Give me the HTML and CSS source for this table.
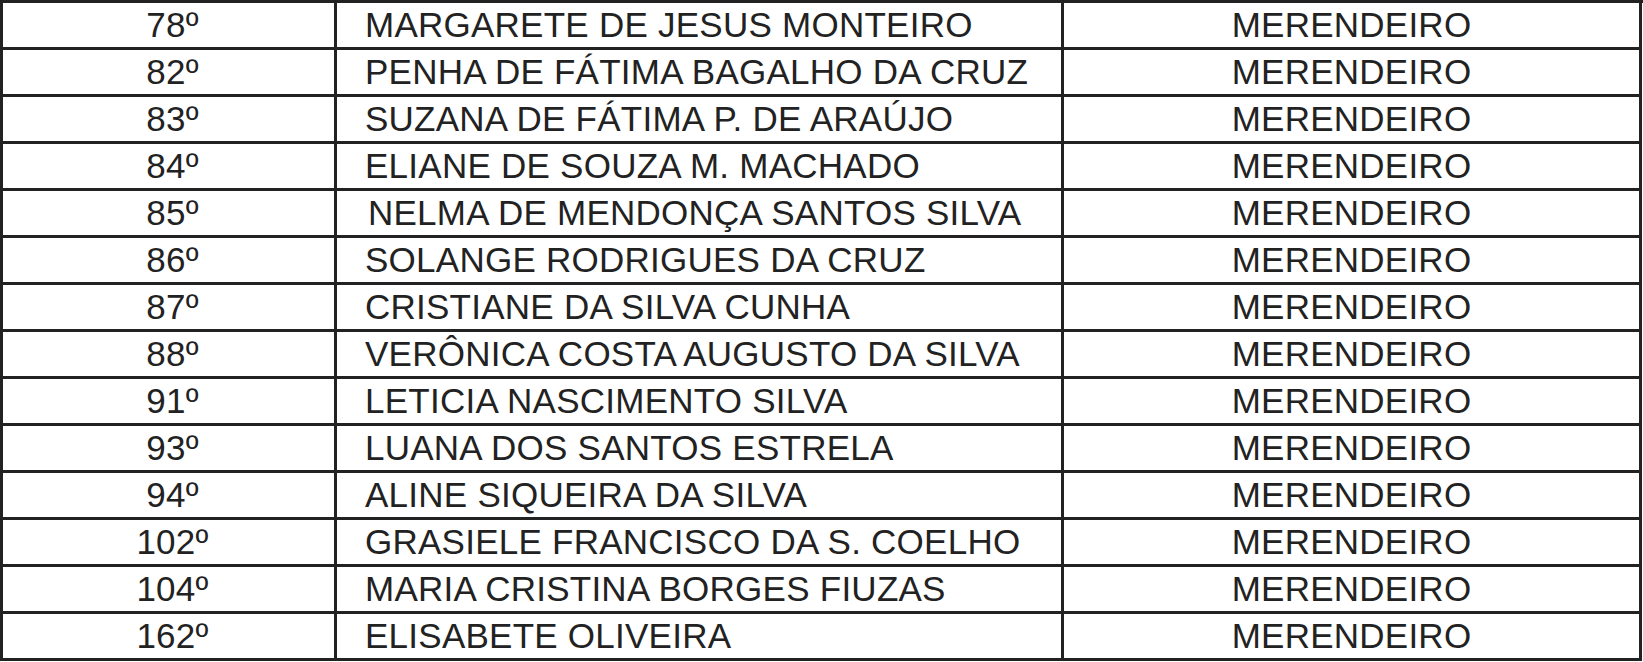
FILE: index.html
```html
<!DOCTYPE html>
<html lang="pt">
<head>
<meta charset="utf-8">
<link rel="stylesheet" href="styles.css">
</head>
<body>
<div class="grid">
  <div class="cell num">78º</div><div class="cell name">MARGARETE DE JESUS MONTEIRO</div><div class="cell role">MERENDEIRO</div>
  <div class="cell num">82º</div><div class="cell name">PENHA DE FÁTIMA BAGALHO DA CRUZ</div><div class="cell role">MERENDEIRO</div>
  <div class="cell num">83º</div><div class="cell name">SUZANA DE FÁTIMA P. DE ARAÚJO</div><div class="cell role">MERENDEIRO</div>
  <div class="cell num">84º</div><div class="cell name">ELIANE DE SOUZA M. MACHADO</div><div class="cell role">MERENDEIRO</div>
  <div class="cell num">85º</div><div class="cell name name-shift">NELMA DE MENDONÇA SANTOS SILVA</div><div class="cell role">MERENDEIRO</div>
  <div class="cell num">86º</div><div class="cell name">SOLANGE RODRIGUES DA CRUZ</div><div class="cell role">MERENDEIRO</div>
  <div class="cell num">87º</div><div class="cell name">CRISTIANE DA SILVA CUNHA</div><div class="cell role">MERENDEIRO</div>
  <div class="cell num">88º</div><div class="cell name">VERÔNICA COSTA AUGUSTO DA SILVA</div><div class="cell role">MERENDEIRO</div>
  <div class="cell num">91º</div><div class="cell name">LETICIA NASCIMENTO SILVA</div><div class="cell role">MERENDEIRO</div>
  <div class="cell num">93º</div><div class="cell name">LUANA DOS SANTOS ESTRELA</div><div class="cell role">MERENDEIRO</div>
  <div class="cell num">94º</div><div class="cell name">ALINE SIQUEIRA DA SILVA</div><div class="cell role">MERENDEIRO</div>
  <div class="cell num">102º</div><div class="cell name">GRASIELE FRANCISCO DA S. COELHO</div><div class="cell role">MERENDEIRO</div>
  <div class="cell num">104º</div><div class="cell name">MARIA CRISTINA BORGES FIUZAS</div><div class="cell role">MERENDEIRO</div>
  <div class="cell num">162º</div><div class="cell name">ELISABETE OLIVEIRA</div><div class="cell role">MERENDEIRO</div>
</div>
</body>
</html>
```

FILE: styles.css
```css
html, body {
  margin: 0;
  padding: 0;
  background: #ffffff;
}
body {
  font-family: "Liberation Sans", Arial, sans-serif;
  color: #222222;
}
.grid {
  width: 1642px;
  display: grid;
  grid-template-columns: 334px 727px 578px;
  grid-auto-rows: 47px;
  border-top: 3px solid #222;
  border-left: 3px solid #222;
}
.cell {
  border-right: 3px solid #222;
  border-bottom: 3px solid #222;
  font-size: 35px;
  letter-spacing: 0.25px;
  line-height: 44px;
  white-space: nowrap;
  overflow: hidden;
}
.num {
  text-align: center;
  padding-left: 8px;
}
.name {
  padding-left: 28px;
}
.name-shift {
  padding-left: 31px;
}
.role {
  text-align: center;
}
```
